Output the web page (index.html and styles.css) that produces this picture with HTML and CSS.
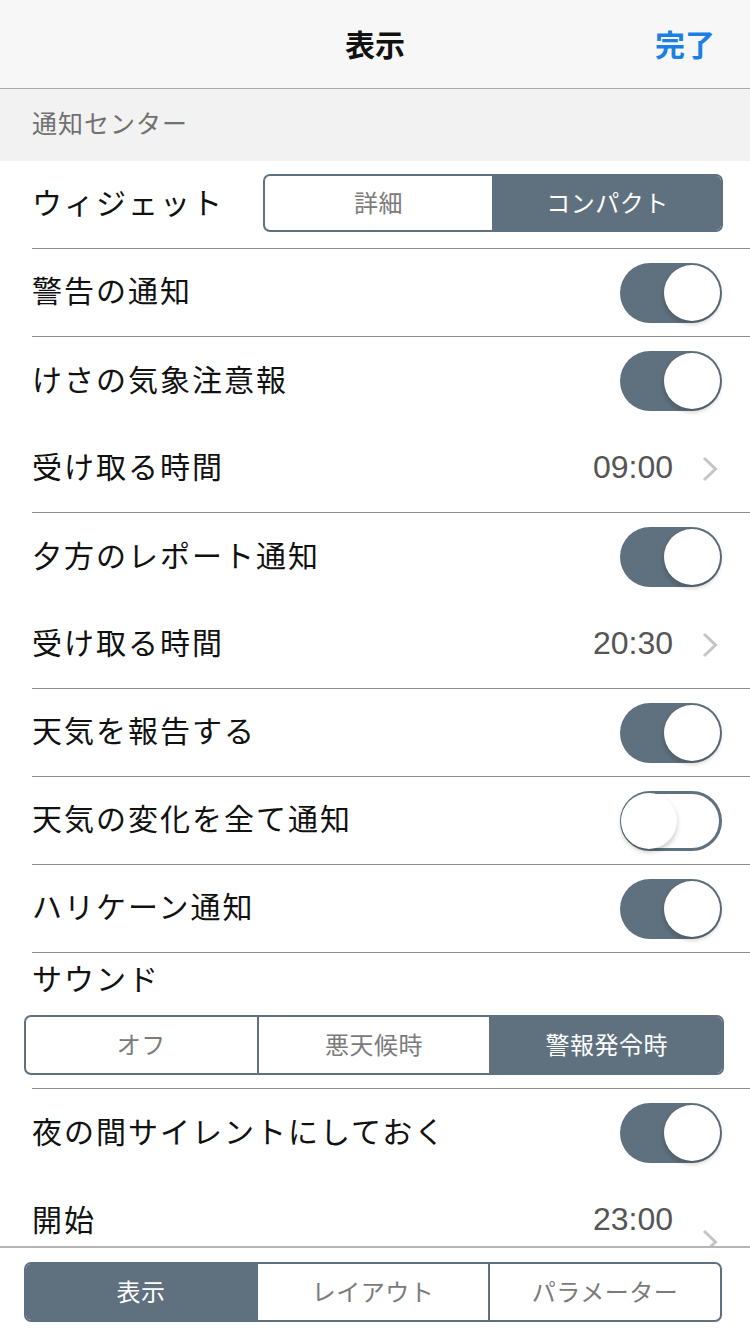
FILE: index.html
```html
<!DOCTYPE html>
<html>

<head>
  <meta http-equiv="Content-Type" content="text/html; charset=utf-8" />
  <meta name="viewport" content="initial-scale=1.0, user-scalable=no" />
  <title>表示</title>
  <link rel="stylesheet" href="styles.css">
</head>

<body>
  <div id="screen">
    <div id="navbar">
      <span class="nav-side"></span>
      <span class="nav-title">表示</span>
      <span class="nav-side nav-done">完了</span>
    </div>

    <div id="list">
      <div class="section-title">通知センター</div>

      <div class="row sep">
        <span class="label">ウィジェット</span>
        <div class="segmented widget-seg">
          <span class="seg">詳細</span>
          <span class="seg active">コンパクト</span>
        </div>
      </div>

      <div class="row sep">
        <span class="label">警告の通知</span>
        <span class="toggle on"><span class="knob"></span></span>
      </div>

      <div class="row">
        <span class="label">けさの気象注意報</span>
        <span class="toggle on"><span class="knob"></span></span>
      </div>

      <div class="row sep link">
        <span class="label">受け取る時間</span>
        <span class="value">09:00</span>
        <svg class="chevron" width="16" height="26" viewBox="0 0 16 26"><polyline points="2,2 13.5,13 2,24" /></svg>
      </div>

      <div class="row">
        <span class="label">夕方のレポート通知</span>
        <span class="toggle on"><span class="knob"></span></span>
      </div>

      <div class="row sep link">
        <span class="label">受け取る時間</span>
        <span class="value">20:30</span>
        <svg class="chevron" width="16" height="26" viewBox="0 0 16 26"><polyline points="2,2 13.5,13 2,24" /></svg>
      </div>

      <div class="row sep">
        <span class="label">天気を報告する</span>
        <span class="toggle on"><span class="knob"></span></span>
      </div>

      <div class="row sep">
        <span class="label">天気の変化を全て通知</span>
        <span class="toggle"><span class="knob"></span></span>
      </div>

      <div class="row sep">
        <span class="label">ハリケーン通知</span>
        <span class="toggle on"><span class="knob"></span></span>
      </div>

      <div class="sound sep">
        <div class="label sound-label">サウンド</div>
        <div class="segmented sound-seg">
          <span class="seg">オフ</span>
          <span class="seg">悪天候時</span>
          <span class="seg active">警報発令時</span>
        </div>
      </div>

      <div class="row">
        <span class="label">夜の間サイレントにしておく</span>
        <span class="toggle on"><span class="knob"></span></span>
      </div>

      <div class="row link">
        <span class="label">開始</span>
        <span class="value">23:00</span>
        <svg class="chevron chevron-low" width="16" height="26" viewBox="0 0 16 26"><polyline points="2,2 13.5,13 2,24" /></svg>
      </div>
    </div>

    <div id="tabbar">
      <div class="segmented tab-seg">
        <span class="seg active">表示</span>
        <span class="seg">レイアウト</span>
        <span class="seg">パラメーター</span>
      </div>
    </div>
  </div>
</body>

</html>
```

FILE: styles.css
```css
* {
  box-sizing: border-box;
}

body {
  margin: 0;
  background: #fff;
  font-family: "Liberation Sans", "Noto Sans CJK JP", sans-serif;
  color: #111;
}

#screen {
  width: 750px;
  height: 1334px;
  display: flex;
  flex-direction: column;
  overflow: hidden;
}

/* top bar */
#navbar {
  height: 89px;
  flex: none;
  display: flex;
  align-items: center;
  justify-content: space-between;
  padding: 0 35px 2px 35px;
  background: #f7f7f7;
  border-bottom: 1px solid #a9a9a9;
}

.nav-side {
  width: 80px;
}

.nav-title {
  font-size: 30px;
  font-weight: 700;
  color: #111;
}

.nav-done {
  font-size: 30px;
  font-weight: 700;
  color: #1a80e4;
  text-align: right;
}

/* list */
#list {
  flex: 1;
  overflow: hidden;
}

.section-title {
  height: 72px;
  display: flex;
  align-items: center;
  padding: 0 0 6px 32px;
  background: #f2f2f2;
  font-size: 25px;
  letter-spacing: 1px;
  color: #707070;
}

.row {
  height: 88px;
  margin-left: 32px;
  padding-right: 28px;
  display: flex;
  align-items: center;
}

.sep {
  border-bottom: 1px solid #8e8e8e;
}

.label {
  flex: 1;
  font-size: 30px;
  letter-spacing: 2px;
  color: #111;
}

.row > .label {
  margin-top: -7px;
}

.row.link {
  padding-right: 32px;
}

.value {
  font-size: 32px;
  color: #555;
  margin-right: 29px;
  margin-top: -3px;
}

.chevron {
  fill: none;
  stroke: #c5c5c9;
  stroke-width: 3;
}

.chevron-low {
  margin-top: 42px;
}

/* toggles */
.toggle {
  width: 102px;
  height: 60px;
  border-radius: 30px;
  display: flex;
  align-items: center;
  padding: 2px;
  background: #fff;
  border: 3px solid #5f717e;
}

.toggle.on {
  background: #5f717e;
  border: none;
  justify-content: flex-end;
}

.knob {
  width: 56px;
  height: 56px;
  flex: none;
  border-radius: 50%;
  background: #fff;
  box-shadow: 0 3px 5px rgba(0, 0, 0, 0.22);
}

.toggle:not(.on) .knob {
  margin-left: -4px;
}

/* segmented controls */
.segmented {
  display: flex;
  border: 2px solid #5f717e;
  border-radius: 7px;
  overflow: hidden;
  background: #fff;
}

.seg {
  flex: 1;
  display: flex;
  align-items: center;
  justify-content: center;
  padding-bottom: 3px;
  font-size: 24px;
  letter-spacing: 0.5px;
  color: #7b7b7b;
  border-left: 2px solid #5f717e;
}

.seg:first-child {
  border-left: none;
}

.seg.active {
  background: #5f717e;
  color: #fff;
}

.widget-seg {
  width: 460px;
  height: 58px;
  margin-top: -4px;
  margin-right: -1px;
}

.sound {
  height: 136px;
  margin-left: 32px;
  padding-top: 5px;
}

.sound-label {
  line-height: 44px;
}

.sound-seg {
  height: 60px;
  margin: 13px 26px 0 -8px;
}

/* bottom bar */
#tabbar {
  height: 88px;
  flex: none;
  border-top: 2px solid #b5b5b5;
  padding: 14px 28px 0 24px;
  background: #fff;
}

.tab-seg {
  height: 60px;
}
```
